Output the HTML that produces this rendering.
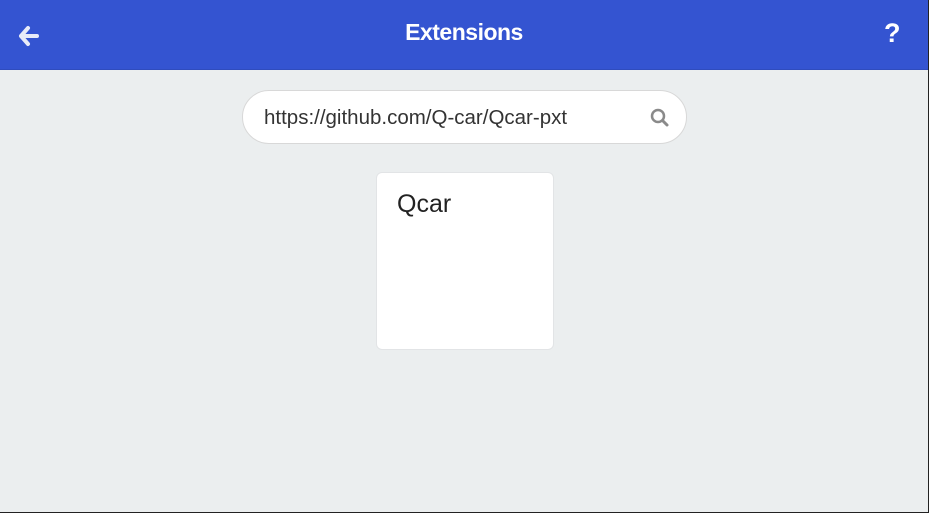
<!DOCTYPE html><html><head><style>
body{margin:0;width:929px;height:513px;overflow:hidden;background:#ebeeef;font-family:"Liberation Sans",sans-serif;position:relative}
.hdr{position:absolute;left:0;top:0;width:928px;height:69px;background:#3454d1;border-bottom:1px solid #2f4cbd}
.t{position:absolute;left:0;width:928px;top:19px;text-align:center;color:#fff;font-weight:bold;font-size:23px;letter-spacing:-0.5px}
.q{position:absolute;left:884px;top:18px;color:#fff;font-weight:bold;font-size:27px}
.srch{position:absolute;left:242px;top:90px;width:445px;height:54px;background:#fff;border:1px solid #d8d8d8;border-radius:27px;box-sizing:border-box}
.srch span{position:absolute;left:21px;top:15px;font-size:20.5px;color:#333}
.card{position:absolute;left:376px;top:172px;width:178px;height:178px;background:#fff;border:1px solid #e2e4e6;border-radius:6px;box-sizing:border-box}
.card span{position:absolute;left:20px;top:17px;font-size:25px;color:#222}
.rb{position:absolute;left:928px;top:0;width:1px;height:513px;background:#222}
.bb{position:absolute;left:0;top:512px;width:929px;height:1px;background:#222}
</style></head><body>
<div class="hdr">
<svg style="position:absolute;left:17px;top:25px" width="22" height="22" viewBox="0 0 22 22"><path d="M11 3L4 11L11 19M4 11H20" stroke="#e8ebf8" stroke-width="4" fill="none" stroke-linecap="round" stroke-linejoin="round"/></svg>
<div class="t">Extensions</div><div class="q">?</div></div>
<div class="srch"><span>https://github.com/Q-car/Qcar-pxt</span>
<svg style="position:absolute;left:407px;top:17px" width="20" height="20" viewBox="0 0 20 20"><circle cx="8" cy="8" r="6" stroke="#8a8a8a" stroke-width="2.5" fill="none"/><path d="M12.5 12.5L17 17" stroke="#8a8a8a" stroke-width="3" stroke-linecap="round"/></svg></div>
<div class="card"><span>Qcar</span></div>
<div class="rb"></div><div class="bb"></div>
</body></html>
